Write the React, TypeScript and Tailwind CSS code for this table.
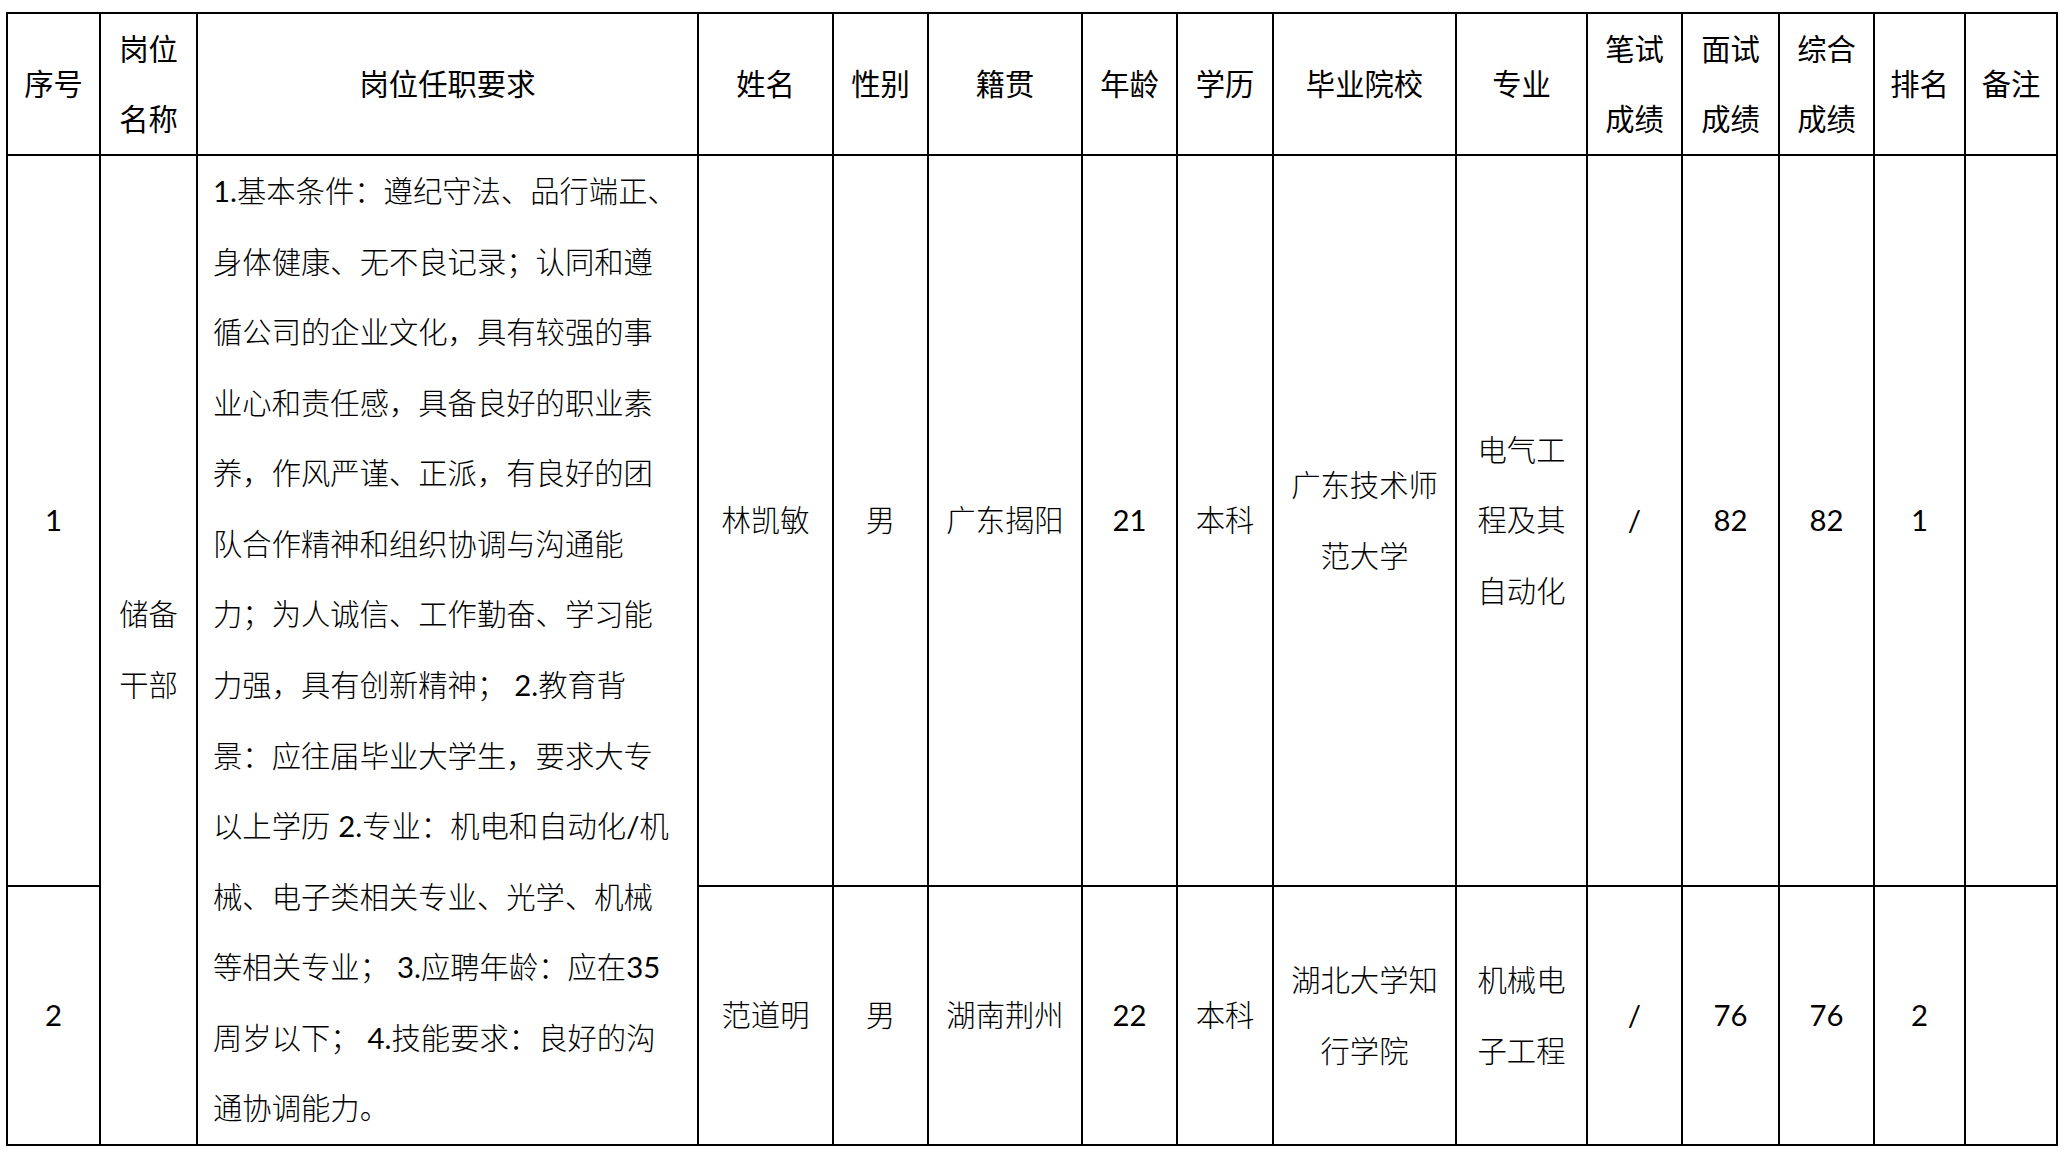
import React from 'react';

// Column widths are the inner widths between the 2px black rules.
const GRID =
  'grid grid-cols-[91px_95px_499px_133px_93px_152px_93px_94px_181px_129px_93px_95px_93px_89px_90px] grid-rows-[140px_729px_257px] gap-[2px] bg-black p-[2px]';

const cellBase =
  'bg-white flex flex-col items-center justify-center text-center leading-[70.57px] whitespace-nowrap';

const headers: string[][] = [
  ['序号'],
  ['岗位', '名称'],
  ['岗位任职要求'],
  ['姓名'],
  ['性别'],
  ['籍贯'],
  ['年龄'],
  ['学历'],
  ['毕业院校'],
  ['专业'],
  ['笔试', '成绩'],
  ['面试', '成绩'],
  ['综合', '成绩'],
  ['排名'],
  ['备注'],
];

const requirement = [
  '1.基本条件：遵纪守法、品行端正、',
  '身体健康、无不良记录；认同和遵',
  '循公司的企业文化，具有较强的事',
  '业心和责任感，具备良好的职业素',
  '养，作风严谨、正派，有良好的团',
  '队合作精神和组织协调与沟通能',
  '力；为人诚信、工作勤奋、学习能',
  '力强，具有创新精神； 2.教育背',
  '景：应往届毕业大学生，要求大专',
  '以上学历 2.专业：机电和自动化/机',
  '械、电子类相关专业、光学、机械',
  '等相关专业； 3.应聘年龄：应在35',
  '周岁以下； 4.技能要求：良好的沟',
  '通协调能力。',
];

type Row = {
  no: string;
  name: string;
  gender: string;
  origin: string;
  age: string;
  edu: string;
  school: string[];
  major: string[];
  written: string;
  interview: string;
  total: string;
  rank: string;
};

const rows: Row[] = [
  {
    no: '1',
    name: '林凯敏',
    gender: '男',
    origin: '广东揭阳',
    age: '21',
    edu: '本科',
    school: ['广东技术师', '范大学'],
    major: ['电气工', '程及其', '自动化'],
    written: '/',
    interview: '82',
    total: '82',
    rank: '1',
  },
  {
    no: '2',
    name: '范道明',
    gender: '男',
    origin: '湖南荆州',
    age: '22',
    edu: '本科',
    school: ['湖北大学知', '行学院'],
    major: ['机械电', '子工程'],
    written: '/',
    interview: '76',
    total: '76',
    rank: '2',
  },
];

// Latin digits stay regular weight, CJK text is set light
function MixedLine({ text }: { text: string }) {
  const parts = text.split(/([0-9./]+)/);
  return (
    <div>
      {parts.map((p, i) =>
        /^[0-9./]+$/.test(p) ? (
          <span key={i} className="font-normal">
            {p}
          </span>
        ) : (
          <span key={i}>{p}</span>
        ),
      )}
    </div>
  );
}

function Cell({ lines, className = '' }: { lines: string[]; className?: string }) {
  return (
    <div className={`${cellBase} ${className}`}>
      {lines.map((l, i) => (
        <span key={i}>{l}</span>
      ))}
    </div>
  );
}

function DataRow({ row, first }: { row: Row; first: boolean }) {
  return (
    <>
      <Cell lines={[row.no]} />
      {first && (
        <>
          <div className={`${cellBase} row-span-2 font-light`}>
            <span>储备</span>
            <span>干部</span>
          </div>
          <div className="row-span-2 bg-white pl-[15px] leading-[70.57px] whitespace-nowrap font-light">
            {requirement.map((l, i) => (
              <MixedLine key={i} text={l} />
            ))}
          </div>
        </>
      )}
      <Cell lines={[row.name]} className="font-light" />
      <Cell lines={[row.gender]} className="font-light" />
      <Cell lines={[row.origin]} className="font-light" />
      <Cell lines={[row.age]} />
      <Cell lines={[row.edu]} className="font-light" />
      <Cell lines={row.school} className="font-light" />
      <Cell lines={row.major} className="font-light" />
      <Cell lines={[row.written]} />
      <Cell lines={[row.interview]} />
      <Cell lines={[row.total]} />
      <Cell lines={[row.rank]} />
      <Cell lines={['']} />
    </>
  );
}

export default function App() {
  return (
    <div className="min-h-[1156px] w-[2070px] bg-white pl-[6px] pt-[12px] text-black font-['Lato','Noto_Sans_CJK_SC',sans-serif] text-[29.33px]">
      <div className={`${GRID} w-[2052px]`}>
        {headers.map((h, i) => (
          <Cell key={i} lines={h} className="leading-[70px]" />
        ))}
        {rows.map((r, i) => (
          <DataRow key={r.no} row={r} first={i === 0} />
        ))}
      </div>
    </div>
  );
}
